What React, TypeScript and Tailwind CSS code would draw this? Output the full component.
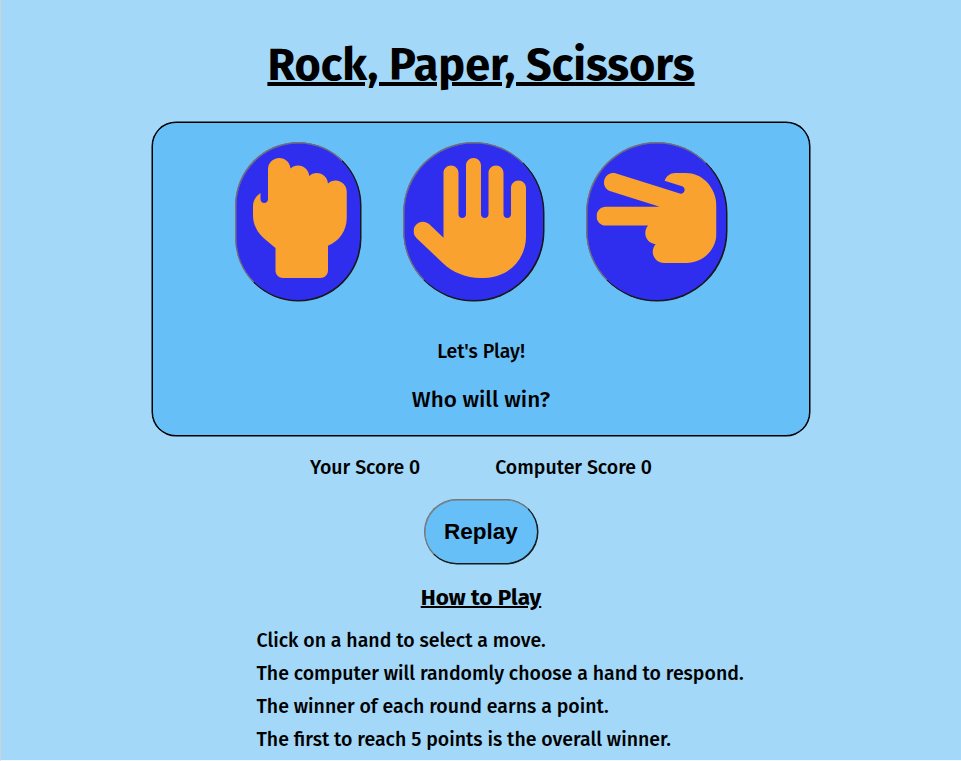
import { FaHand, FaHandBackFist, FaHandScissors } from "react-icons/fa6";

const bevelClass =
  "rounded-full border border-t-[#777] border-l-[#777] border-r-[#181818] border-b-[#181818] shadow-[0.5px_0.5px_0_0_#181818,inset_0.5px_0.5px_0_0_#777]";
const handClass = `${bevelClass} flex h-[159px] items-center justify-center bg-[#302eee] pb-2 text-[#f9a22f] text-[120px]`;

const rules = [
  "Click on a hand to select a move.",
  "The computer will randomly choose a hand to respond.",
  "The winner of each round earns a point.",
  "The first to reach 5 points is the overall winner.",
];

export default function App() {
  return (
    <div className="h-[761px] overflow-hidden border-b border-l border-b-[#f4f9fc] border-l-[#cdd3d7] bg-[#a3d8f8] font-['Fira_Sans','Noto_Sans',sans-serif] text-[19.5px] font-medium whitespace-nowrap text-black">
      <main className="flex flex-col items-center">
        <h1 className="mt-[35px] h-[60px] text-[45px] leading-[60px] font-bold underline decoration-4 underline-offset-2">
          Rock, Paper, Scissors
        </h1>
        <section className="mt-[27px] flex h-[314px] w-[658px] flex-col items-center rounded-[24px] border border-black bg-[#67bff8] shadow-[0_0_0_0.5px_#000]">
          <div className="mt-[19px] flex gap-[42px]">
            <button className={`${handClass} w-[126px]`} aria-label="Rock">
              <FaHandBackFist className="h-[120px] w-[105px] -translate-x-[0.5px]" />
            </button>
            <button className={`${handClass} w-[141px]`} aria-label="Paper">
              <FaHand className="-translate-x-[0.5px]" />
            </button>
            <button className={`${handClass} w-[141px]`} aria-label="Scissors">
              <FaHandScissors className="-translate-x-[0.5px]" />
            </button>
          </div>
          <p className="mt-[37px] h-[28px] leading-[28px]">Let's Play!</p>
          <p className="mt-[19px] h-[30px] text-[22.5px] leading-[30px]">Who will win?</p>
        </section>
        <div className="mt-[18px] flex h-[28px] w-[342px] justify-between leading-[28px]">
          <p>Your Score 0</p>
          <p>Computer Score 0</p>
        </div>
        <button className={`${bevelClass} mt-[17px] h-[65px] w-[114px] bg-[#67bff8] font-['Liberation_Sans',sans-serif] text-[22.5px] font-bold`}>
          Replay
        </button>
        <h2 className="mt-[19px] h-[30px] text-[22.5px] leading-[30px] font-bold underline decoration-2 underline-offset-1">
          How to Play
        </h2>
        <div className="mt-[11px] w-[449px]">
          {rules.map((rule) => (
            <p key={rule} className="leading-[33px]">{rule}</p>
          ))}
        </div>
      </main>
    </div>
  );
}
